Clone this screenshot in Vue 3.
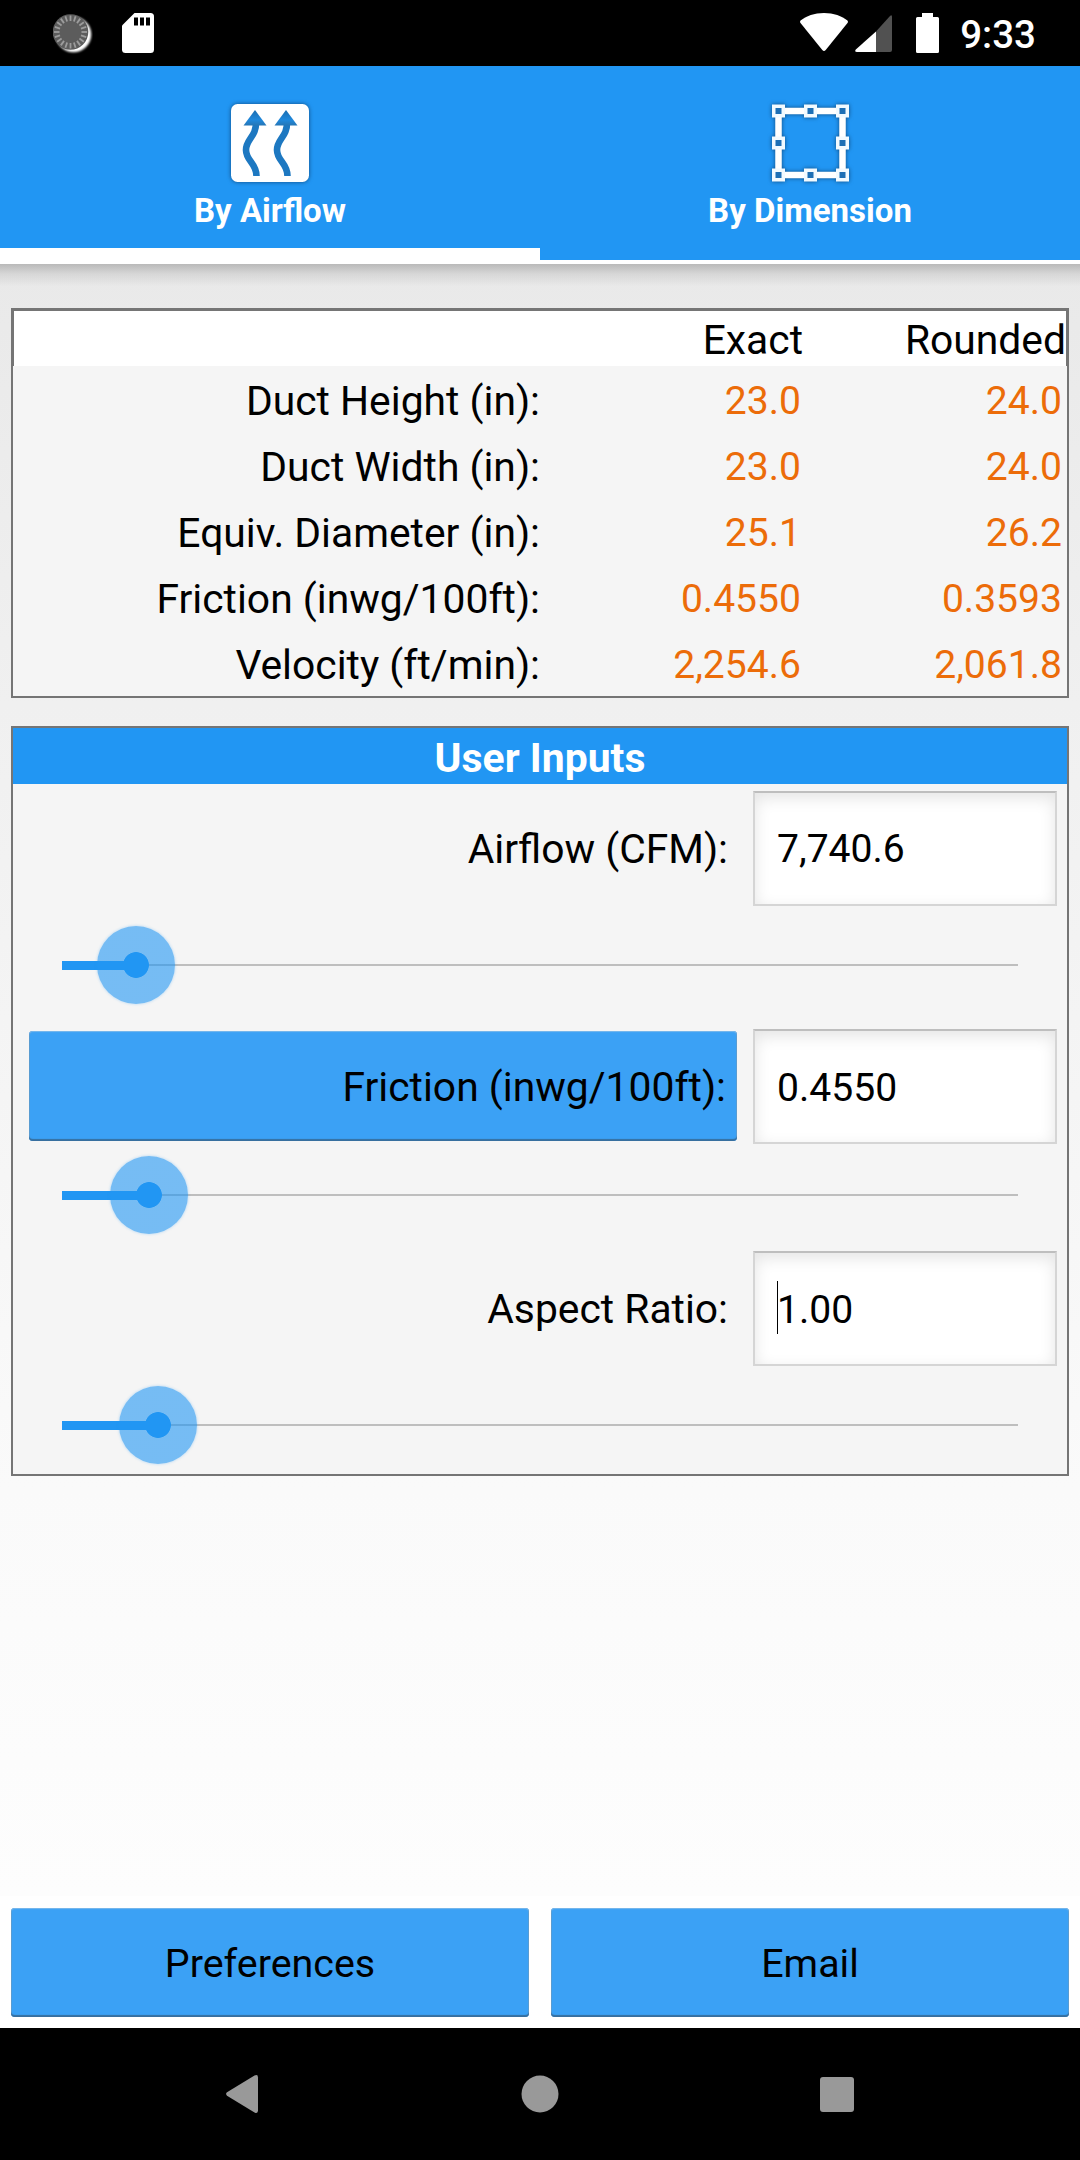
<script setup>
const results = [
  { label: 'Duct Height (in):', exact: '23.0', rounded: '24.0' },
  { label: 'Duct Width (in):', exact: '23.0', rounded: '24.0' },
  { label: 'Equiv. Diameter (in):', exact: '25.1', rounded: '26.2' },
  { label: 'Friction (inwg/100ft):', exact: '0.4550', rounded: '0.3593' },
  { label: 'Velocity (ft/min):', exact: '2,254.6', rounded: '2,061.8' }
]
const inputs = [
  { id: 'airflow', label: 'Airflow (CFM):', value: '7,740.6', thumb: 74 },
  { id: 'friction', label: 'Friction (inwg/100ft):', value: '0.4550', thumb: 87, button: true },
  { id: 'aspect', label: 'Aspect Ratio:', value: '1.00', thumb: 96, focused: true }
]
const ticks = Array.from({ length: 20 }, (_, i) => i * 18)
const handles = [[6.5, 6.5], [38.5, 6.5], [70.5, 6.5], [6.5, 38.5], [70.5, 38.5], [6.5, 70.5], [38.5, 70.5], [70.5, 70.5]]
</script>

<template>
  <div class="screen">
    <header class="status">
      <div class="status-left">
        <svg width="40" height="42" viewBox="0 0 40 42">
          <defs>
            <filter id="soft" x="-20%" y="-20%" width="140%" height="140%"><feGaussianBlur stdDeviation="0.8" /></filter>
          </defs>
          <circle cx="20.500" cy="21.500" r="17.800" fill="#fff" filter="url(#soft)" />
          <circle cx="17.500" cy="19" r="17.800" fill="#5c5c5c" />
          <g stroke="#9c9c9c" stroke-width="1.8">
            <line v-for="a in ticks" :key="a" x1="17.500" y1="2.500" x2="17.500" y2="8" :transform="`rotate(${a} 17.5 19)`" />
          </g>
        </svg>
        <svg class="sd" width="32" height="40" viewBox="0 0 32 40">
          <path d="M12.5 0H28.5A3.5 3.5 0 0 1 32 3.5V36.5A3.5 3.5 0 0 1 28.5 40H3.5A3.5 3.5 0 0 1 0 36.5V12.5Z" fill="#fff" />
          <path d="M12 4.5h4v8h-4zM18 4.5h4v8h-4zM24 4.5h4v8h-4z" fill="#000" />
        </svg>
      </div>
      <div class="status-right">
        <svg width="48" height="40" viewBox="0 0 48 40">
          <path d="M24 0C14.500 0 6 3 .6 7.500Q-.4 8.500.5 10L22.300 37Q24 39 25.700 37L47.500 10Q48.400 8.500 47.400 7.500C42 3 33.500 0 24 0Z" fill="#fff" />
        </svg>
        <svg class="cell" width="38" height="40" viewBox="0 0 38 40">
          <path d="M21 18.500 35 3Q37 1 37 4V37Q37 39 35 39H21Z" fill="#515151" />
          <path d="M21 18.500V39H2Q-.8 39 .8 36.500Z" fill="#fff" />
        </svg>
        <svg class="battery" width="23" height="40" viewBox="0 0 23 40">
          <path d="M6 0H17V4H21.500Q23 4 23 5.500V38.500Q23 40 21.500 40H1.500Q0 40 0 38.500V5.500Q0 4 1.500 4H6Z" fill="#fff" />
        </svg>
        <span class="clock">9:33</span>
      </div>
    </header>

    <nav class="tabs">
      <div class="tab active">
        <svg class="tab-icon" width="78" height="78" viewBox="0 0 78 78">
          <defs>
            <linearGradient id="head" x1="0" y1="0" x2="0" y2="1">
              <stop offset="0" stop-color="#1a6db0" /><stop offset=".65" stop-color="#1f88dc" /><stop offset="1" stop-color="#2676b5" />
            </linearGradient>
          </defs>
          <rect width="78" height="78" rx="6.500" fill="#fff" />
          <g v-for="x in [0, 31]" :key="x" :transform="`translate(${x} 0)`">
            <path d="M25 18C25.500 33 15 35 15 46C15 57 25.500 59 25.500 72" fill="none" stroke="#1d78c1" stroke-width="6.600" />
            <path d="M24 6 35.500 21.500H12.500Z" fill="url(#head)" />
          </g>
        </svg>
        <span>By Airflow</span>
      </div>
      <div class="tab">
        <svg class="tab-icon" width="77" height="78" viewBox="0 0 77 77">
          <rect x="6.500" y="6.500" width="64" height="64" fill="none" stroke="#fff" stroke-width="6.500" />
          <rect v-for="(h, i) in handles" :key="i" :x="h[0] - 4.750" :y="h[1] - 4.750" width="9.500" height="9.500" fill="#1d6fb5" stroke="#f2faff" stroke-width="3.500" />
        </svg>
        <span>By Dimension</span>
      </div>
    </nav>

    <main class="content">
      <section class="results">
        <div class="row head"><span></span><span>Exact</span><span>Rounded</span></div>
        <div v-for="r in results" :key="r.label" class="row">
          <span>{{ r.label }}</span><span class="num exact">{{ r.exact }}</span><span class="num">{{ r.rounded }}</span>
        </div>
      </section>

      <section class="inputs">
        <h2>User Inputs</h2>
        <template v-for="f in inputs" :key="f.id">
          <div class="field" :class="f.id">
            <div class="label" :class="{ button: f.button }">{{ f.label }}</div>
            <div class="box"><i v-if="f.focused" class="caret"></i>{{ f.value }}</div>
          </div>
          <div class="slider">
            <div class="track">
              <div class="fill" :style="{ width: f.thumb + 'px' }"></div>
              <div class="thumb" :style="{ left: f.thumb + 'px' }"></div>
            </div>
          </div>
        </template>
      </section>
    </main>

    <div class="actions">
      <div class="button">Preferences</div>
      <div class="button">Email</div>
    </div>

    <footer class="system-nav">
      <svg width="34" height="38" viewBox="0 0 34 38"><path d="M1 17.300 28.500.6Q32-1 32 2.500V35.500Q32 39 28.500 37.400L1 20.700Q-.8 19 1 17.300Z" fill="#999" /></svg>
      <svg width="38" height="38" viewBox="0 0 38 38"><circle cx="19" cy="19" r="18.500" fill="#999" /></svg>
      <svg width="34" height="35" viewBox="0 0 34 35"><rect width="34" height="35" rx="3" fill="#999" /></svg>
    </footer>
  </div>
</template>

<style>
body { margin: 0; }
</style>

<style scoped>
* { box-sizing: border-box; }
.screen {
  width: 1080px;
  height: 2160px;
  display: flex;
  flex-direction: column;
  overflow: hidden;
  font-family: Roboto, "Liberation Sans", sans-serif;
  font-size: 40.8px;
  color: #000;
  background: #fff;
}
svg { display: block; flex: none; }
.status {
  height: 66px;
  flex: none;
  display: flex;
  justify-content: space-between;
  background: #000;
  padding: 13px 44px 0 53px;
}
.status-left, .status-right { display: flex; align-items: flex-start; }
.sd { margin-left: 29px; }
.cell { margin-left: 7px; }
.battery { margin-left: 23px; }
.clock {
  margin-left: 21px;
  color: #fff;
  font-size: 38.5px;
  font-weight: 500;
  line-height: 44px;
}
.tabs {
  height: 198px;
  flex: none;
  display: flex;
  background: #2196f3;
}
.tab {
  flex: 1;
  display: flex;
  flex-direction: column;
  align-items: center;
  padding-top: 38px;
  border-bottom: 4px solid #fff;
  color: #fff;
  font-size: 33px;
  font-weight: 700;
}
.tab.active { border-bottom-width: 16px; }
.tab span { line-height: 40px; margin-top: 9px; }
.tab-icon { overflow: visible; filter: drop-shadow(0 0 2px rgba(10, 50, 90, .75)); }
.content {
  height: 1632px;
  flex: none;
  padding: 44px 11px 0;
  background:
    linear-gradient(#b9b9b9, rgba(205, 205, 205, .65) 45%, rgba(233, 233, 233, 0)) 0 0 / 100% 22px no-repeat,
    linear-gradient(#e9e9e9, #f0f0f0 27%, #fafafa 75%, #fdfdfd);
}
.results {
  height: 390px;
  border: 2px solid #757575;
  background: #f5f5f5;
}
.row {
  display: grid;
  grid-template-columns: 527px 262px 1fr;
  height: 66px;
  align-items: center;
  text-align: right;
  line-height: 66px;
  white-space: nowrap;
}
.row.head {
  height: 56px;
  margin-bottom: 2px;
  line-height: 58px;
  background: #fff;
  border: 1px solid #757575;
  border-bottom: 0;
  grid-template-columns: 526px 263px 1fr;
}
.num { color: #ec6c09; font-size: 39.1px; padding-right: 5px; }
.num.exact { padding-right: 1px; }
.inputs {
  margin-top: 28px;
  height: 750px;
  border: 2px solid #757575;
  background: #f5f5f5;
}
h2 {
  margin: 0;
  height: 56px;
  background: #2196f3;
  color: #fff;
  font-size: 40.9px;
  line-height: 61px;
  text-align: center;
}
.field {
  display: flex;
  height: 142px;
  padding: 12px 10px 0 16px;
}
.field.airflow { height: 137px; padding-top: 7px; }
.field.friction { padding-top: 20px; }
.label {
  width: 708px;
  height: 110px;
  margin-top: 2px;
  padding-right: 9px;
  line-height: 112px;
  text-align: right;
}
.button {
  background: #3ba1f5;
  border-radius: 4px;
  box-shadow: inset 0 -2px 1px #376f9f, inset 0 1px 1px #7cb9ec, inset 1px 0 0 #5b9fd6, inset -1px 0 0 #5b9fd6;
}
.label.button { padding-right: 11px; }
.box {
  position: relative;
  margin-left: 16px;
  width: 304px;
  height: 115px;
  padding-left: 22px;
  border: 2px solid #d5d5d5;
  border-top-color: #bebebe;
  background: #fff;
  box-shadow: inset 0 5px 16px rgba(0, 0, 0, .11);
  font-size: 39.1px;
  line-height: 114px;
}
.field.airflow .box { line-height: 113px; }
.caret {
  position: absolute;
  left: 22px;
  top: 28px;
  width: 1px;
  height: 53px;
  background: #000;
}
.slider {
  height: 88px;
  padding: 43px 49px 0;
}
.track {
  position: relative;
  height: 2px;
  background: #bebebe;
}
.fill {
  position: absolute;
  left: 0;
  top: -3px;
  height: 9px;
  background: #2196f3;
}
.thumb {
  position: absolute;
  top: -38px;
  width: 78px;
  height: 78px;
  margin-left: -39px;
  border-radius: 50%;
  background: radial-gradient(circle, #2196f3 12.5px, rgba(33, 150, 243, .6) 13.2px);
  box-shadow: 0 0 3px rgba(33, 150, 243, .35);
}
.actions {
  height: 132px;
  flex: none;
  display: grid;
  grid-template-columns: 1fr 1fr;
  gap: 22px;
  padding: 12px 11px 11px;
  background: #fff;
}
.actions .button {
  line-height: 112px;
  height: 109px;
  text-align: center;
  font-size: 39.4px;
}
.system-nav {
  flex: 1;
  display: flex;
  align-items: center;
  justify-content: space-between;
  padding: 0 226px;
  background: #000;
}
</style>
